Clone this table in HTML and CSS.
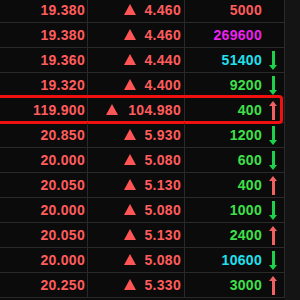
FILE: index.html
```html
<!DOCTYPE html>
<html>
<head>
<meta charset="utf-8">
<link rel="stylesheet" href="styles.css">
</head>
<body>
<div class="screen">
  <div class="table">
    <div class="row"><div class="c price">19.380</div><div class="c chg"><span class="tri"></span><span>4.460</span></div><div class="c vol"><span class="red">5000</span><span class="arr"></span></div></div>
    <div class="row"><div class="c price">19.380</div><div class="c chg"><span class="tri"></span><span>4.460</span></div><div class="c vol"><span class="mag">269600</span><span class="arr"></span></div></div>
    <div class="row"><div class="c price">19.360</div><div class="c chg"><span class="tri"></span><span>4.440</span></div><div class="c vol"><span class="cyan">51400</span><span class="arr down"></span></div></div>
    <div class="row"><div class="c price">19.320</div><div class="c chg"><span class="tri"></span><span>4.400</span></div><div class="c vol"><span class="green">9200</span><span class="arr down"></span></div></div>
    <div class="row hl"><div class="c price">119.900</div><div class="c chg wide"><span class="tri"></span><span>104.980</span></div><div class="c vol"><span class="green">400</span><span class="arr up"></span></div><div class="box"></div></div>
    <div class="row"><div class="c price">20.850</div><div class="c chg"><span class="tri"></span><span>5.930</span></div><div class="c vol"><span class="green">1200</span><span class="arr down"></span></div></div>
    <div class="row"><div class="c price">20.000</div><div class="c chg"><span class="tri"></span><span>5.080</span></div><div class="c vol"><span class="green">600</span><span class="arr down"></span></div></div>
    <div class="row"><div class="c price">20.050</div><div class="c chg"><span class="tri"></span><span>5.130</span></div><div class="c vol"><span class="green">400</span><span class="arr up"></span></div></div>
    <div class="row"><div class="c price">20.000</div><div class="c chg"><span class="tri"></span><span>5.080</span></div><div class="c vol"><span class="green">1000</span><span class="arr down"></span></div></div>
    <div class="row"><div class="c price">20.050</div><div class="c chg"><span class="tri"></span><span>5.130</span></div><div class="c vol"><span class="green">2400</span><span class="arr up"></span></div></div>
    <div class="row"><div class="c price">20.000</div><div class="c chg"><span class="tri"></span><span>5.080</span></div><div class="c vol"><span class="cyan">10600</span><span class="arr down"></span></div></div>
    <div class="row"><div class="c price">20.250</div><div class="c chg"><span class="tri"></span><span>5.330</span></div><div class="c vol"><span class="green">3000</span><span class="arr up"></span></div></div>
  </div>
  <div class="strip"></div>
</div>
</body>
</html>
```

FILE: styles.css
```css
html, body {
  margin: 0;
  padding: 0;
  background: #0b0b0b;
  overflow: hidden;
}
.screen {
  display: flex;
  width: 300px;
  height: 300px;
  overflow: hidden;
}
.table {
  width: 285px;
  margin-top: -2px;
  display: flex;
  flex-direction: column;
}
.row {
  position: relative;
  display: grid;
  grid-template-columns: 88px 97px 100px;
  height: 24px;
  border-bottom: 1px solid #2a2a2a;
  font-family: "Liberation Sans", Arial, sans-serif;
  font-weight: bold;
  font-size: 14px;
  letter-spacing: 0.3px;
  color: #ff5c5c;
  flex: none;
}
.c {
  display: flex;
  align-items: center;
  justify-content: flex-end;
  border-right: 1px solid #2a2a2a;
  line-height: 24px;
}
.price {
  padding-right: 2px;
}
.chg {
  padding-right: 3px;
  gap: 8px;
}
.chg.wide {
  gap: 10px;
}
.vol {
  padding-right: 7px;
  gap: 7px;
}
.tri {
  width: 0;
  height: 0;
  border-left: 6px solid transparent;
  border-right: 6px solid transparent;
  border-bottom: 11px solid #ff5555;
  margin-top: -1px;
}
.arr {
  width: 8px;
  height: 19px;
  display: block;
}
.arr.down {
  background:
    linear-gradient(#1fd04a, #1fd04a) center top / 3px 15px no-repeat;
  position: relative;
}
.arr.down::after {
  content: "";
  position: absolute;
  left: 0;
  bottom: 0;
  border-left: 4px solid transparent;
  border-right: 4px solid transparent;
  border-top: 5px solid #1fd04a;
}
.arr.up {
  background:
    linear-gradient(#f06262, #f06262) center bottom / 3px 15px no-repeat;
  position: relative;
}
.arr.up::after {
  content: "";
  position: absolute;
  left: 0;
  top: 0;
  border-left: 4px solid transparent;
  border-right: 4px solid transparent;
  border-bottom: 5px solid #f06262;
}
.red { color: #ff5c5c; }
.mag { color: #ee22ee; }
.cyan { color: #22e0ee; }
.green { color: #3fe04a; }
.box {
  position: absolute;
  left: -10px;
  right: 2px;
  top: -3px;
  bottom: -2px;
  border: 3px solid #f01010;
  border-radius: 4px;
  pointer-events: none;
}
.strip {
  flex: 1;
  background: #141414;
}
```
